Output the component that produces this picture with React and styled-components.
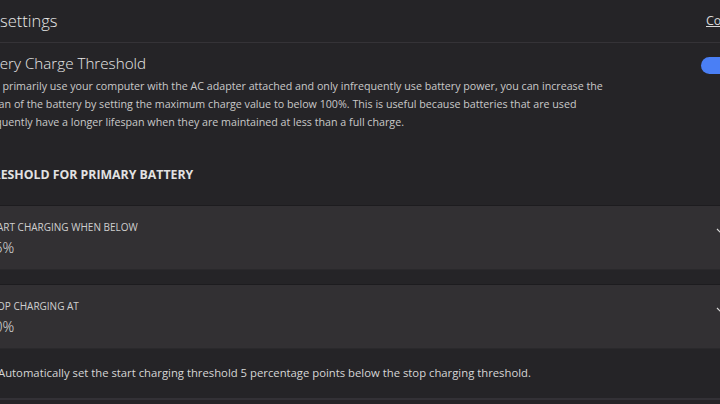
import React from "react";
import styled, { createGlobalStyle } from "styled-components";

const Global = createGlobalStyle`
  html, body { margin: 0; padding: 0; background: #252427; overflow: hidden; }
  body { font-family: "Open Sans", "Noto Sans", sans-serif; color: #e4e4e4; }
`;

const Viewport = styled.div`
  width: 720px;
  height: 404px;
  overflow: hidden;
  background: #252427;
`;

const Page = styled.div`
  margin-left: -28px;
  width: 769px;
  display: flex;
  flex-direction: column;
`;

const Header = styled.header`
  height: 42px;
  display: flex;
  align-items: center;
  justify-content: space-between;
  border-bottom: 1px solid #353337;
`;

const HeaderTitle = styled.h1`
  margin: 0 0 2px -24px;
  font-size: 16.5px;
  font-weight: 300;
  color: #e8e8e8;
  white-space: nowrap;
  word-spacing: 1px;
`;

const HeaderLink = styled.a`
  font-size: 12.5px;
  color: #d8d8d8;
  text-decoration: underline;
  white-space: nowrap;
  width: 35px;
  overflow: hidden;
  margin-bottom: 2px;
`;

const Section = styled.section`
  display: flex;
  align-items: flex-start;
  justify-content: space-between;
  padding-top: 10px;
`;

const TextCol = styled.div`
  display: flex;
  flex-direction: column;
`;

const Title = styled.h2`
  margin: 0;
  font-size: 15.2px;
  font-weight: 300;
  line-height: 20px;
  color: #e8e8e8;
`;

const Desc = styled.p`
  margin: 4px 0 0;
  font-size: 10.7px;
  line-height: 18px;
  color: #c9c9c9;
  white-space: nowrap;
`;

const Toggle = styled.div`
  width: 40px;
  height: 17px;
  border-radius: 9px;
  background: #4a7ff5;
  margin-top: 4px;
  flex-shrink: 0;
`;

const GroupHeading = styled.h3`
  margin: 35px 0 0 4px;
  font-size: 12.3px;
  font-weight: 700;
  line-height: 18px;
  color: #e2e2e2;
`;

const Rows = styled.div`
  margin-top: 21px;
  display: flex;
  flex-direction: column;
  gap: 14px;
`;

const Row = styled.div`
  height: 65px;
  box-sizing: border-box;
  background: #323033;
  border-top: 1px solid #1d1c1f;
  border-bottom: 1px solid #2a292c;
  display: flex;
  align-items: center;
  justify-content: space-between;
  padding: 0 11px 0 14px;
`;

const RowText = styled.div`
  display: flex;
  flex-direction: column;
  gap: 4px;
  margin-top: 2px;
`;

const RowLabel = styled.span`
  font-size: 10px;
  line-height: 14px;
  color: #cfcfcf;
`;

const RowValue = styled.span`
  font-size: 14.5px;
  font-weight: 300;
  line-height: 20px;
  color: #e0e0e0;
`;

const Chevron = styled.svg`
  width: 14px;
  height: 8px;
  margin-top: -12px;
`;

const CheckRow = styled.label`
  display: flex;
  align-items: center;
  gap: 8px;
  margin-top: 12px;
  height: 22px;
  font-size: 11.3px;
  color: #d6d6d6;
  white-space: nowrap;
`;

const Box = styled.span`
  width: 16px;
  height: 16px;
  border-radius: 3px;
  background: #4a7ff5;
  margin-left: 2px;
  flex-shrink: 0;
`;

const BottomLine = styled.div`
  margin-top: 15px;
  height: 2px;
  background: #333136;
`;

const Down = () => (
  <Chevron viewBox="0 0 14 8" fill="none">
    <path d="M1 1l6 6 6-6" stroke="#d8d8d8" strokeWidth="1.2" />
  </Chevron>
);

export default function App() {
  return (
    <Viewport>
      <Global />
      <Page>
        <Header>
          <HeaderTitle>Power settings</HeaderTitle>
          <HeaderLink>Copy settings</HeaderLink>
        </Header>
        <Section>
          <TextCol>
            <Title>Battery Charge Threshold</Title>
            <Desc>
              If you primarily use your computer with the AC adapter attached and only infrequently use battery power, you can increase the
              <br />
              lifespan of the battery by setting the maximum charge value to below 100%. This is useful because batteries that are used
              <br />
              infrequently have a longer lifespan when they are maintained at less than a full charge.
            </Desc>
          </TextCol>
          <Toggle />
        </Section>
        <GroupHeading>THRESHOLD FOR PRIMARY BATTERY</GroupHeading>
        <Rows>
          <Row>
            <RowText>
              <RowLabel>START CHARGING WHEN BELOW</RowLabel>
              <RowValue>85%</RowValue>
            </RowText>
            <Down />
          </Row>
          <Row>
            <RowText>
              <RowLabel>STOP CHARGING AT</RowLabel>
              <RowValue>90%</RowValue>
            </RowText>
            <Down />
          </Row>
        </Rows>
        <CheckRow>
          <Box />
          Automatically set the start charging threshold 5 percentage points below the stop charging threshold.
        </CheckRow>
        <BottomLine />
      </Page>
    </Viewport>
  );
}
